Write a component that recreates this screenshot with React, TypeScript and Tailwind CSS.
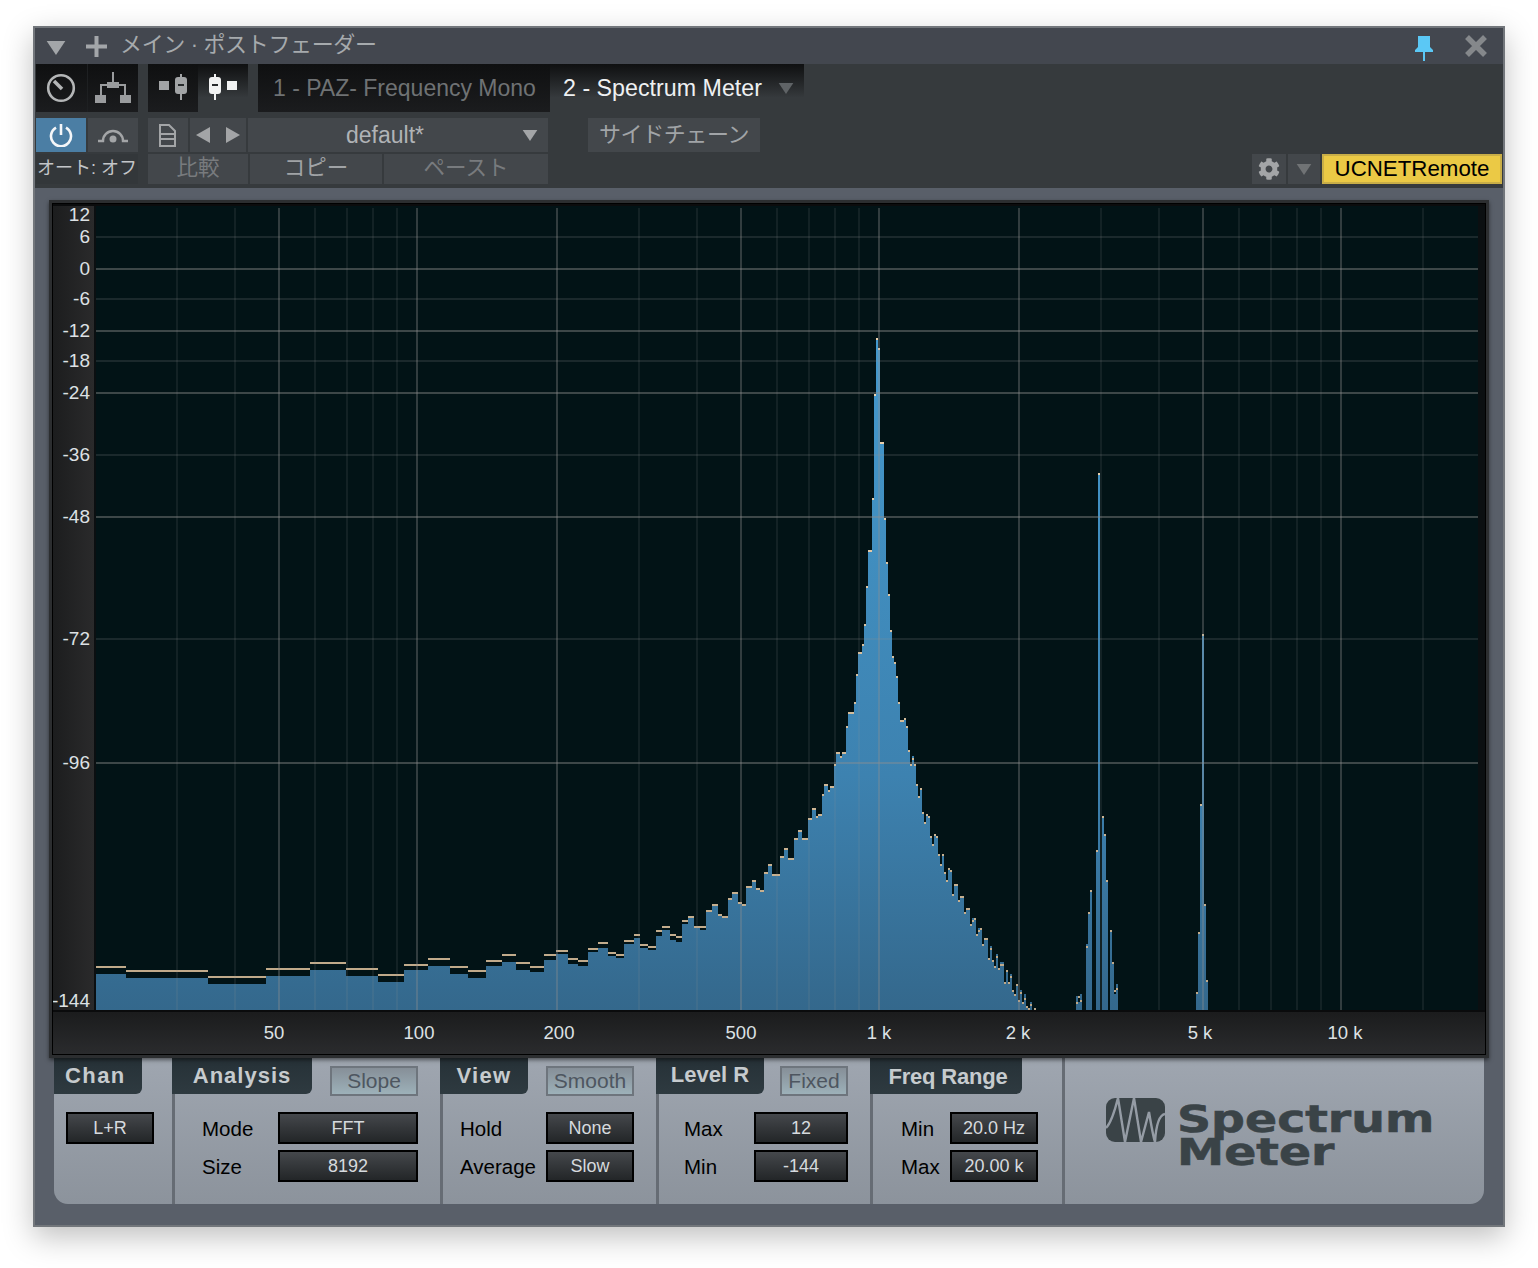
import { FaCog } from "react-icons/fa";

const CJK = "font-['Liberation_Sans','Noto_Sans_CJK_JP',sans-serif]";

// bars: x0, x1, top of bar, peak-hold marker
const BARS: number[][] = [
  [96, 126, 974, 966], [126, 208, 978, 970], [208, 266, 984, 976], [266, 310, 976, 968],
  [310, 346, 970, 962], [346, 378, 976, 968], [378, 404, 982, 974], [404, 428, 970, 964],
  [428, 450, 966, 958], [450, 468, 974, 966], [468, 486, 978, 970], [486, 502, 966, 960],
  [502, 516, 962, 954], [516, 530, 970, 962], [530, 544, 972, 966], [544, 556, 960, 954],
  [556, 568, 954, 950], [568, 578, 964, 958], [578, 588, 966, 960], [588, 598, 952, 948],
  [598, 608, 948, 942], [608, 616, 956, 952], [616, 624, 958, 954], [624, 634, 944, 940],
  [634, 640, 938, 934], [640, 648, 948, 944], [648, 656, 950, 946], [656, 662, 936, 930],
  [662, 670, 930, 926], [670, 676, 940, 934], [676, 682, 942, 936], [682, 688, 924, 920],
  [688, 694, 918, 916], [694, 700, 928, 926], [700, 706, 930, 926], [706, 712, 912, 910],
  [712, 718, 906, 904], [718, 722, 916, 914], [722, 728, 918, 916], [728, 732, 900, 898],
  [732, 738, 894, 892], [738, 742, 904, 902], [742, 746, 906, 904], [746, 752, 888, 886],
  [752, 756, 882, 880], [756, 760, 890, 888], [760, 764, 892, 890], [764, 768, 874, 872],
  [768, 772, 866, 864], [772, 780, 876, 874], [780, 784, 858, 856], [784, 788, 850, 848],
  [788, 794, 860, 858], [794, 798, 840, 838], [798, 802, 832, 830], [802, 808, 840, 838],
  [808, 812, 820, 818], [812, 816, 810, 808], [816, 818, 818, 816], [818, 822, 816, 814],
  [822, 824, 794, 794], [824, 828, 784, 784], [828, 830, 790, 790], [830, 834, 786, 786],
  [834, 836, 764, 764], [836, 840, 752, 752], [840, 842, 756, 756], [842, 846, 752, 752],
  [846, 848, 726, 726], [848, 854, 712, 712], [854, 856, 702, 702], [856, 858, 674, 674],
  [858, 862, 652, 652], [862, 864, 644, 644], [864, 866, 624, 624], [866, 868, 586, 586],
  [868, 872, 550, 550], [872, 874, 498, 498], [874, 876, 394, 394], [876, 878, 338, 338],
  [878, 880, 348, 348], [880, 884, 442, 442], [884, 886, 518, 518], [886, 888, 562, 562],
  [888, 890, 594, 594], [890, 892, 630, 630], [892, 894, 656, 656], [894, 896, 662, 662],
  [896, 898, 676, 676], [898, 900, 702, 702], [900, 904, 720, 720], [904, 906, 718, 718],
  [906, 908, 726, 726], [908, 910, 750, 750], [910, 912, 764, 764], [912, 914, 756, 758],
  [914, 916, 764, 764], [916, 918, 784, 784], [918, 920, 796, 796], [920, 922, 788, 788],
  [922, 924, 812, 812], [924, 926, 822, 822], [926, 928, 814, 814], [928, 930, 816, 816],
  [930, 932, 836, 836], [932, 934, 844, 844], [934, 936, 834, 834], [936, 938, 836, 836],
  [938, 940, 854, 854], [940, 942, 864, 864], [942, 944, 854, 854], [944, 946, 872, 872],
  [946, 948, 880, 880], [948, 950, 868, 868], [950, 952, 870, 870], [952, 954, 894, 894],
  [954, 958, 884, 884], [958, 960, 900, 900], [960, 964, 896, 896], [964, 966, 912, 912],
  [966, 970, 908, 908], [970, 972, 924, 924], [972, 974, 918, 920], [974, 976, 918, 918],
  [976, 978, 934, 934], [978, 980, 928, 930], [980, 982, 928, 928], [982, 984, 944, 944],
  [984, 988, 938, 938], [988, 990, 958, 958], [990, 992, 946, 948], [992, 994, 960, 960],
  [994, 996, 966, 966], [996, 998, 954, 956], [998, 1000, 968, 968], [1000, 1004, 962, 964],
  [1004, 1006, 982, 982], [1006, 1008, 970, 970], [1008, 1010, 982, 982], [1010, 1012, 974, 976],
  [1012, 1014, 990, 990], [1014, 1016, 994, 994], [1016, 1018, 984, 984], [1018, 1020, 1000, 1000],
  [1020, 1022, 990, 992], [1022, 1024, 1002, 1002], [1024, 1026, 994, 998], [1026, 1028, 1006, 1006],
  [1028, 1030, 1008, 1008], [1030, 1032, 1002, 1004], [1034, 1036, 1010, 1008],
  [1076, 1078, 996, 1002], [1078, 1080, 1002, 996], [1080, 1082, 994, 1000],
  [1086, 1088, 944, 946], [1088, 1090, 912, 912], [1090, 1092, 890, 890],
  [1096, 1098, 850, 850], [1098, 1100, 473, 473], [1102, 1104, 816, 816],
  [1104, 1106, 834, 834], [1106, 1108, 880, 880], [1110, 1112, 930, 930],
  [1112, 1114, 962, 962], [1114, 1116, 994, 990], [1116, 1118, 984, 988],
  [1196, 1198, 992, 992], [1198, 1200, 932, 932], [1200, 1202, 804, 804],
  [1202, 1204, 634, 634], [1204, 1206, 904, 904], [1206, 1208, 980, 980],
];

const V_MAJOR = [279, 417, 557, 741, 879, 1019, 1203, 1341];
const V_MINOR = [177, 235, 315, 347, 373, 397, 639, 697, 777, 809, 835, 859, 1101, 1159, 1239, 1271, 1297, 1321, 1423];
const H_MAJOR = [269, 331, 393, 517, 763];
const H_MINOR = [237, 299, 361, 455, 639];

const Y_LABELS: [string, number][] = [
  ["12", 221], ["6", 243], ["0", 275], ["-6", 305], ["-12", 337], ["-18", 367],
  ["-24", 399], ["-36", 461], ["-48", 523], ["-72", 645], ["-96", 769], ["-144", 1007],
];
const X_LABELS: [string, number][] = [
  ["50", 274], ["100", 419], ["200", 559], ["500", 741],
  ["1 k", 879], ["2 k", 1018], ["5 k", 1200], ["10 k", 1345],
];

function Triangle({ className }: { className: string }) {
  return (
    <svg className={className} viewBox="0 0 16 12" fill="currentColor">
      <path d="M0 0h16L8 12z" />
    </svg>
  );
}

function Knob() {
  return (
    <svg className="w-[30px] h-[30px]" viewBox="0 0 30 30" fill="none" stroke="#b4b6b7">
      <circle cx="15" cy="15" r="12.8" strokeWidth="2.6" />
      <path d="M8 8l8 8" strokeWidth="3.6" />
    </svg>
  );
}

function Routing() {
  return (
    <svg className="w-[38px] h-[32px]" viewBox="0 0 38 32" fill="#9a9c9e">
      <rect x="18" y="0" width="2" height="12" />
      <rect x="13" y="10" width="12" height="6" />
      <rect x="6" y="12" width="26" height="2" />
      <rect x="6" y="12" width="2" height="12" />
      <rect x="30" y="12" width="2" height="12" />
      <rect x="1" y="23" width="11" height="8" />
      <rect x="26" y="23" width="11" height="8" />
    </svg>
  );
}

function ChannelIcon({ color, flip }: { color: string; flip?: boolean }) {
  return (
    <svg className={`w-[34px] h-[28px] ${flip ? "-scale-x-100" : ""}`} viewBox="0 0 34 28" fill={color}>
      <rect x="0" y="7" width="10" height="9" />
      <rect x="21" y="0" width="2" height="26" />
      <rect x="16" y="3" width="12" height="17" rx="3" />
      <rect x="19" y="10" width="6" height="2" fill="#26292b" />
    </svg>
  );
}

function Pin() {
  return (
    <svg className="w-[18px] h-[26px]" viewBox="0 0 18 26" fill="#5bc8f5">
      <path d="M3 0h12v11l3 3v2H10v9H8v-9H0v-2l3-3z" />
    </svg>
  );
}

function Spectrum() {
  return (
    <svg className="block w-[1432px] h-[850px]" viewBox="53 204 1432 850">
      <defs>
        <linearGradient id="bar" gradientUnits="userSpaceOnUse" x1="0" y1="340" x2="0" y2="1010">
          <stop offset="0" stopColor="#4499cd" />
          <stop offset="0.65" stopColor="#3d82b0" />
          <stop offset="1" stopColor="#34688c" />
        </linearGradient>
        <linearGradient id="peak" gradientUnits="userSpaceOnUse" x1="0" y1="340" x2="0" y2="1010">
          <stop offset="0" stopColor="#f3d7b2" />
          <stop offset="1" stopColor="#bda788" />
        </linearGradient>
        <linearGradient id="gutter" x1="0" y1="0" x2="1" y2="0">
          <stop offset="0" stopColor="#1c1d1e" />
          <stop offset="1" stopColor="#2a2a2b" />
        </linearGradient>
        <linearGradient id="strip" x1="0" y1="0" x2="0" y2="1">
          <stop offset="0" stopColor="#1b1c1d" />
          <stop offset="1" stopColor="#2a2b2d" />
        </linearGradient>
      </defs>
      <rect x="53" y="1012" width="1432" height="42" fill="url(#strip)" />
      <rect x="53" y="204" width="41" height="808" fill="url(#gutter)" />
      <rect x="53" y="204" width="1432" height="2" fill="#0b0c0d" />
      <rect x="94" y="206" width="1391" height="806" fill="#0b0f11" />
      <rect x="96" y="206" width="1382" height="804" fill="#021316" />
      <rect x="53" y="1010" width="1432" height="2" fill="#0a0b0c" />

      {BARS.map(([x0, x1, top], i) => (
        <rect key={i} x={x0} y={top} width={x1 - x0} height={1010 - top} fill="url(#bar)" />
      ))}
      {BARS.map(([x0, x1, , peak], i) => (
        <rect key={i} x={x0} y={peak} width={x1 - x0} height={2} fill="url(#peak)" />
      ))}

      {V_MINOR.map((x) => (
        <rect key={x} x={x - 1} y={208} width={2} height={802} fill="#909090" fillOpacity={0.12} />
      ))}
      {V_MAJOR.map((x) => (
        <rect key={x} x={x - 1} y={208} width={2} height={802} fill="#909090" fillOpacity={0.34} />
      ))}
      {H_MINOR.map((y) => (
        <rect key={y} x={96} y={y - 1} width={1382} height={2} fill="#909090" fillOpacity={0.18} />
      ))}
      {H_MAJOR.map((y) => (
        <rect key={y} x={96} y={y - 1} width={1382} height={2} fill="#909090" fillOpacity={0.42} />
      ))}

      <g fill="#dde1e4" fontSize="18.5" fontFamily="'Liberation Sans', sans-serif">
        {Y_LABELS.map(([t, y]) => (
          <text key={t} x={90} y={y} textAnchor="end" fontSize="19">{t}</text>
        ))}
        {X_LABELS.map(([t, x]) => (
          <text key={t} x={x} y={1039} textAnchor="middle">{t}</text>
        ))}
      </g>
    </svg>
  );
}

function Tab({ label, cls }: { label: string; cls: string }) {
  return (
    <div className={`h-[36px] -ml-[3px] flex items-center justify-center rounded-br-[6px] bg-gradient-to-b from-[#263137] to-[#2e3a40] text-[22px] font-bold text-[#c6cbce] ${cls}`}>
      {label}
    </div>
  );
}

function Toggle({ label, w }: { label: string; w: string }) {
  return (
    <div className={`${w} h-[30px] mt-[8px] flex items-center justify-center border-2 border-[#6e757d] bg-gradient-to-b from-[#868f98] to-[#9db1b9] text-[21px] text-[#4e5660]`}>
      {label}
    </div>
  );
}

function Value({ label, w }: { label: string; w: string }) {
  return (
    <div className={`${w} h-[32px] flex items-center justify-center border-2 border-black bg-gradient-to-b from-[#45484c] to-[#232628] text-[18px] text-[#d6dade]`}>
      {label}
    </div>
  );
}

function Row({ label, labelW, children }: { label: string; labelW: string; children: React.ReactNode }) {
  return (
    <div className="flex items-center h-[32px]">
      <span className={`${labelW} pt-[2px] text-[20.5px] text-black`}>{label}</span>
      {children}
    </div>
  );
}

function Section({ w, children }: { w: string; children: React.ReactNode }) {
  return <div className={`${w} shrink-0 border-l-[3px] border-[#666c74]`}>{children}</div>;
}

export default function App() {
  return (
    <div className={`w-[1538px] h-[1268px] bg-white pt-[26px] pl-[33px] ${CJK}`}>
      <div className="w-[1472px] h-[1201px] border-2 border-[#72767b] bg-[#595f69] shadow-[0_10px_28px_rgba(0,0,0,0.25)]">
        {/* title bar */}
        <div className="h-[36px] flex items-center bg-[#43474f] pl-[11px] pr-[16px]">
          <Triangle className="w-[20px] h-[14px] mt-[3px] text-[#a3a6a9]" />
          <svg className="w-[21px] h-[21px] ml-[20px]" viewBox="0 0 21 21" fill="#a3a6a9">
            <path d="M8.5 0h4v8.5H21v4h-8.5V21h-4v-8.5H0v-4h8.5z" />
          </svg>
          <span className="ml-[13px] pb-[3px] text-[22px] tracking-[-0.35px] text-[#a6aaad]">メイン · ポストフェーダー</span>
          <div className="ml-auto mt-[6px]"><Pin /></div>
          <svg className="w-[22px] h-[22px] ml-[32px]" viewBox="0 0 22 22" stroke="#85888b" strokeWidth="5.5">
            <path d="M2 2l18 18M20 2L2 20" />
          </svg>
        </div>

        {/* toolbar */}
        <div className="h-[124px] bg-[#363a3d]">
          <div className="h-[48px] flex pl-[1px]">
            <div className="w-[102px] flex gap-[1px] bg-[#1e2022]">
              <div className="flex-1 flex items-center justify-center bg-gradient-to-b from-[#0f1011] to-[#1b1c1e]"><Knob /></div>
              <div className="flex-1 flex items-center justify-center bg-gradient-to-b from-[#0f1011] to-[#1b1c1e]"><Routing /></div>
            </div>
            <div className="w-[100px] ml-[10px] flex">
              <div className="flex-1 flex items-center justify-center pl-[6px] bg-gradient-to-b from-[#0f1011] to-[#1b1c1e]"><ChannelIcon color="#a2a4a6" /></div>
              <div className="flex-1 flex items-center justify-center pr-[6px] bg-gradient-to-b from-[#0f1011] to-[#363a3d] to-[70%]"><ChannelIcon color="#f1f2f2" flip /></div>
            </div>
            <div className="w-[292px] ml-[10px] flex items-center pl-[15px] bg-gradient-to-b from-[#0f1011] to-[#1b1c1e] text-[23px] text-[#6f7274] whitespace-nowrap">
              1 - PAZ- Frequency Mono
            </div>
            <div className="w-[254px] flex items-center pl-[13px] bg-gradient-to-b from-[#0f1011] to-[#363a3d] to-[70%] text-[23.25px] text-[#eef0f2] whitespace-nowrap">
              2 - Spectrum Meter
              <Triangle className="w-[16px] h-[11px] ml-[16px] text-[#5f6366]" />
            </div>
          </div>
          <div className="h-[34px] mt-[6px] flex pl-[1px] text-[#b0b3b6]">
            <div className="w-[50px] flex items-center justify-center bg-[#4b7ea4]">
              <svg className="w-[24px] h-[24px]" viewBox="0 0 24 24" fill="none" stroke="#f4f6f8" strokeWidth="2.6">
                <path d="M7 4.6a10 10 0 1 0 10 0M12 1v11" />
              </svg>
            </div>
            <div className="w-[50px] ml-[2px] flex items-center justify-center bg-[#43474b]">
              <svg className="w-[32px] h-[16px]" viewBox="0 0 32 16" fill="none" stroke="#a3a5a7" strokeWidth="2.4">
                <path d="M1 14h5a10 10 0 0 1 20 0h5" />
                <circle cx="16" cy="12" r="3.5" fill="#a3a5a7" stroke="none" />
              </svg>
            </div>
            <div className="w-[40px] ml-[10px] flex items-center justify-center pr-[2px] bg-[#43474b]">
              <svg className="w-[19px] h-[23px]" viewBox="0 0 19 23" fill="none" stroke="#a3a5a7" strokeWidth="2">
                <path d="M2 1h9l6 6v15H2zM2 10h15M2 15h15" />
              </svg>
            </div>
            <div className="w-[56px] ml-[2px] flex items-center justify-center gap-[16px] bg-[#43474b]">
              <svg className="w-[14px] h-[16px]" viewBox="0 0 14 16" fill="#a3a5a7"><path d="M14 0v16L0 8z" /></svg>
              <svg className="w-[14px] h-[16px]" viewBox="0 0 14 16" fill="#a3a5a7"><path d="M0 0v16l14-8z" /></svg>
            </div>
            <div className="w-[300px] ml-[2px] relative flex items-center justify-center bg-[#43474b] text-[23px]">
              <span className="mr-[26px]">default*</span>
              <Triangle className="absolute right-[10px] w-[16px] h-[11px] text-[#a3a5a7]" />
            </div>
            <div className="w-[172px] ml-[40px] flex items-center justify-center pb-[2px] bg-[#43474b] text-[22px] tracking-[-0.4px] text-[#a1a4a7]">サイドチェーン</div>
          </div>
          <div className="h-[30px] mt-[2px] flex pl-[1px] pr-[1px] text-[21.5px]">
            <div className="w-[102px] flex items-center justify-center pb-[1px] bg-[#33373a] text-[18px] text-[#c3c6c9] whitespace-nowrap">オート: オフ</div>
            <div className="w-[100px] ml-[10px] flex items-center justify-center pb-[2px] bg-[#43474b] text-[#787b7e]">比較</div>
            <div className="w-[132px] ml-[2px] flex items-center justify-center pb-[2px] bg-[#43474b] text-[#a0a3a6]">コピー</div>
            <div className="w-[164px] ml-[2px] flex items-center justify-center pb-[2px] bg-[#43474b] text-[#787b7e]">ペースト</div>
            <div className="w-[34px] ml-auto flex items-center justify-center bg-[#43474b]">
              <FaCog className="w-[22px] h-[22px] text-[#a3a5a7]" />
            </div>
            <div className="w-[32px] ml-[2px] flex items-center justify-center bg-[#43474b]">
              <Triangle className="w-[16px] h-[11px] text-[#707375]" />
            </div>
            <div className="w-[180px] ml-[2px] flex items-center justify-center border-2 border-[#c9ae47] bg-[#ebc945] text-[22.3px] text-black">UCNETRemote</div>
          </div>
        </div>

        {/* meter body */}
        <div className="pt-[12px] pl-[14px]">
          <div className="relative z-10 w-[1440px] h-[858px] border-[3px] border-[#2c2e30] shadow-[0_2px_4px_rgba(0,0,0,0.5)]">
            <div className="border border-black"><Spectrum /></div>
          </div>
          <div className="ml-[5px] w-[1430px] h-[146px] flex rounded-b-[14px] bg-gradient-to-b from-[#9fa6b0] to-[#8c939c] overflow-hidden">
            <div className="w-[118px] shrink-0">
              <div className="w-[88px] h-[36px] flex items-center pl-[11px] rounded-br-[6px] bg-gradient-to-b from-[#263137] to-[#2e3a40] pb-[2px] text-[22px] font-bold tracking-[1.4px] text-[#c6cbce]">Chan</div>
              <div className="mt-[18px] ml-[12px]"><Value label="L+R" w="w-[88px]" /></div>
            </div>
            <Section w="w-[268px]">
              <div className="flex h-[36px]">
                <Tab label="Analysis" cls="w-[140px] pb-[1px] tracking-[1px]" />
                <div className="ml-[18px]"><Toggle label="Slope" w="w-[88px]" /></div>
              </div>
              <div className="mt-[18px] ml-[27px] flex flex-col gap-[6px]">
                <Row label="Mode" labelW="w-[76px]"><Value label="FFT" w="w-[140px]" /></Row>
                <Row label="Size" labelW="w-[76px]"><Value label="8192" w="w-[140px]" /></Row>
              </div>
            </Section>
            <Section w="w-[216px]">
              <div className="flex h-[36px]">
                <Tab label="View" cls="w-[88px] pb-[1px] tracking-[1.3px]" />
                <div className="ml-[18px]"><Toggle label="Smooth" w="w-[88px]" /></div>
              </div>
              <div className="mt-[18px] ml-[17px] flex flex-col gap-[6px]">
                <Row label="Hold" labelW="w-[86px]"><Value label="None" w="w-[88px]" /></Row>
                <Row label="Average" labelW="w-[86px]"><Value label="Slow" w="w-[88px]" /></Row>
              </div>
            </Section>
            <Section w="w-[214px]">
              <div className="flex h-[36px]">
                <Tab label="Level R" cls="w-[108px] pb-[4px]" />
                <div className="ml-[16px]"><Toggle label="Fixed" w="w-[68px]" /></div>
              </div>
              <div className="mt-[18px] ml-[25px] flex flex-col gap-[6px]">
                <Row label="Max" labelW="w-[70px]"><Value label="12" w="w-[94px]" /></Row>
                <Row label="Min" labelW="w-[70px]"><Value label="-144" w="w-[94px]" /></Row>
              </div>
            </Section>
            <Section w="w-[192px]">
              <Tab label="Freq Range" cls="w-[152px] pl-[4px] tracking-[-0.2px]" />
              <div className="mt-[18px] ml-[28px] flex flex-col gap-[6px]">
                <Row label="Min" labelW="w-[49px]"><Value label="20.0 Hz" w="w-[88px]" /></Row>
                <Row label="Max" labelW="w-[49px]"><Value label="20.00 k" w="w-[88px]" /></Row>
              </div>
            </Section>
            <div className="flex-1 flex border-l-[3px] border-[#666c74] pl-[41px] pt-[40px]">
              <svg className="w-[59px] h-[44px] shrink-0" viewBox="0 0 59 44">
                <rect width="59" height="44" rx="9" fill="#3a4347" />
                <path d="M0 30C4 26 8 16 12 0L19 44L28 0L35 44L43 14C45 26 47 38 49 44C50 28 53 17 59 16" fill="none" stroke="#959ca5" strokeWidth="2.4" />
              </svg>
              <div className="ml-[12px] mt-[5px] font-['DejaVu_Sans',sans-serif] text-[37px] font-bold leading-[33px] text-[#3a4347] [-webkit-text-stroke:0.6px_#3a4347]">
                <div className="origin-left scale-x-[1.28]">Spectrum</div>
                <div className="origin-left scale-x-[1.28]">Meter</div>
              </div>
            </div>
          </div>
        </div>
      </div>
    </div>
  );
}
